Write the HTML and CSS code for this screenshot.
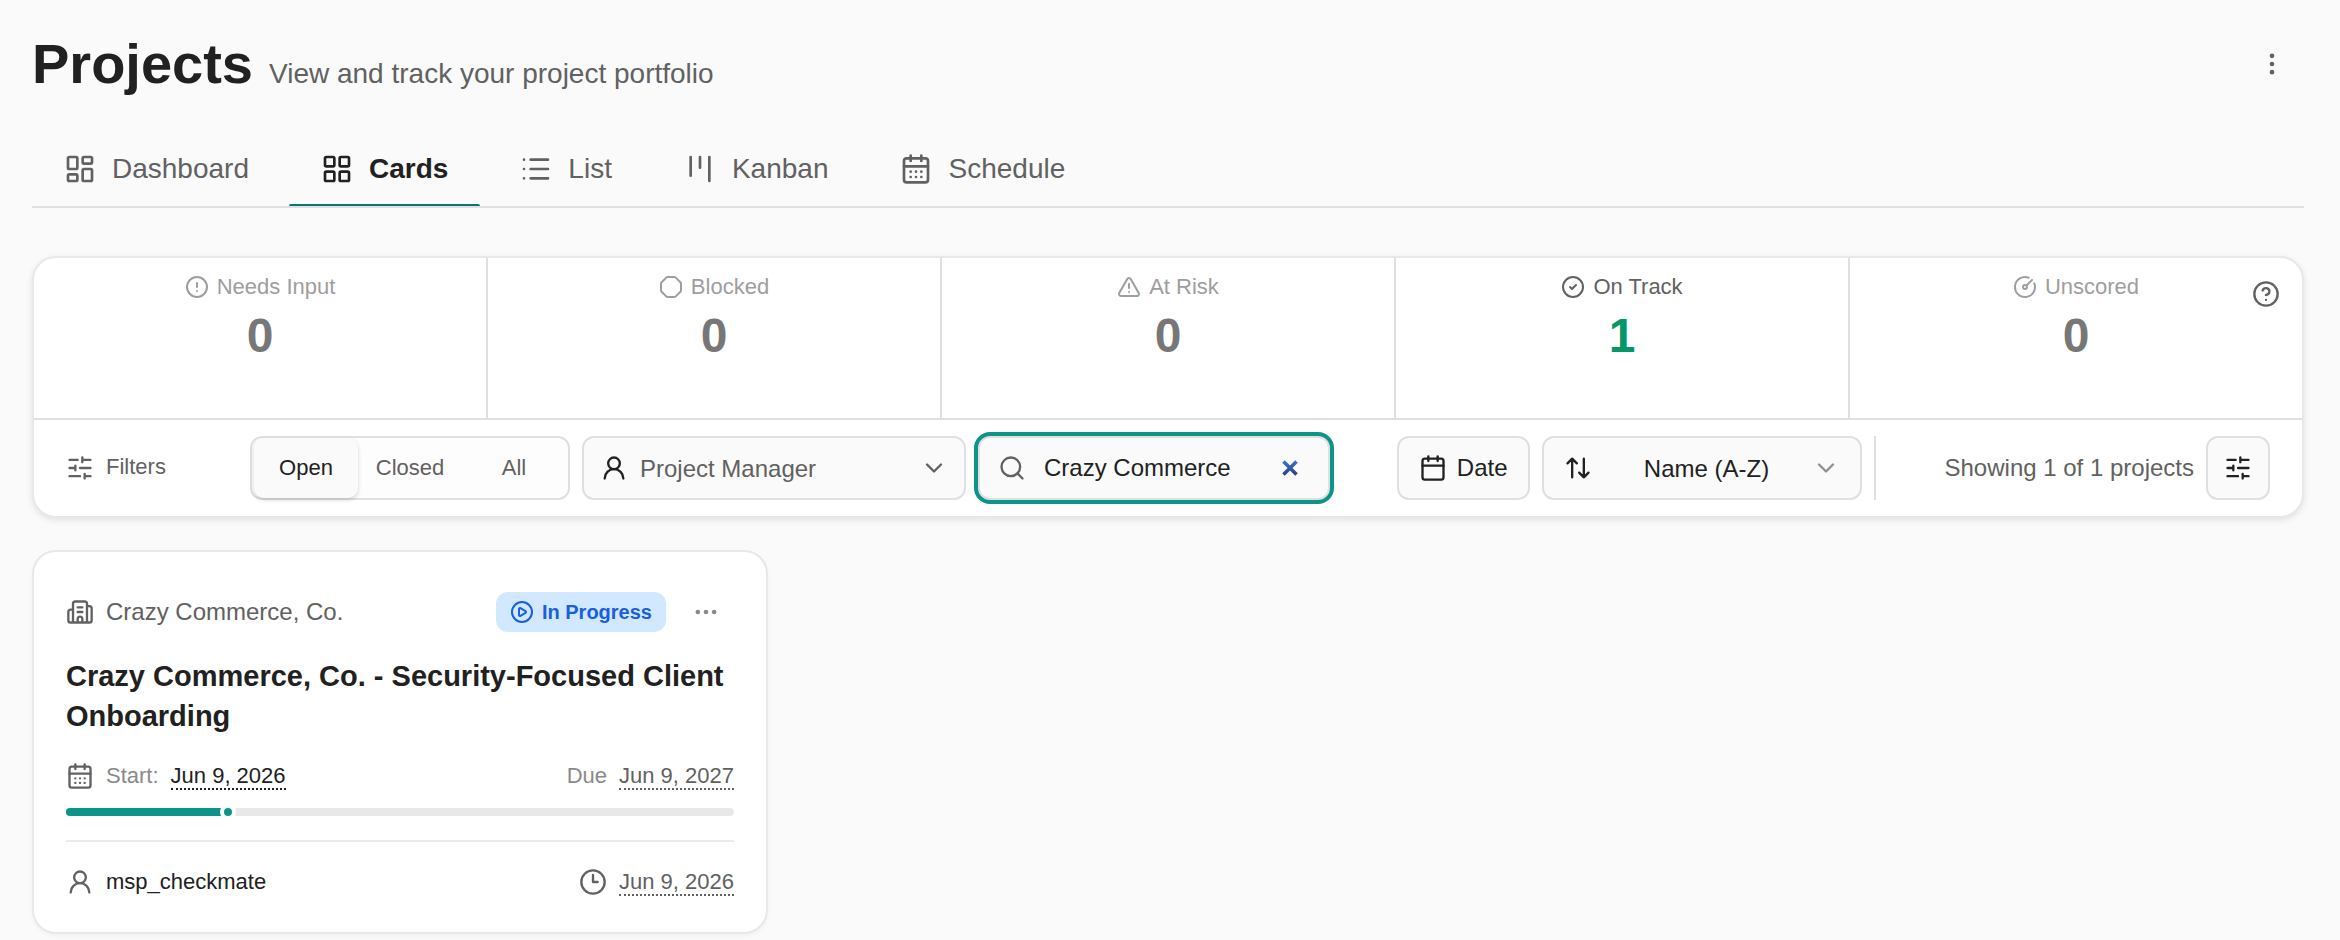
FILE: index.html
```html
<!DOCTYPE html>
<html lang="en">
<head>
<meta charset="utf-8">
<meta name="viewport" content="width=device-width, initial-scale=1">
<title>Projects</title>
<link rel="stylesheet" href="styles.css">
</head>
<body>
<svg class="sprite" aria-hidden="true">
  <symbol id="i-calendar" viewBox="0 0 24 24"><path d="M8 2v4M16 2v4M3 10h18"/><rect x="3" y="4" width="18" height="18" rx="2"/></symbol>
  <symbol id="i-calendar-days" viewBox="0 0 24 24"><path d="M8 2v4M16 2v4M3 10h18M8 14h.01M12 14h.01M16 14h.01M8 18h.01M12 18h.01M16 18h.01"/><rect x="3" y="4" width="18" height="18" rx="2"/></symbol>
  <symbol id="i-sliders" viewBox="0 0 24 24"><path d="M10 5H3M12 19H3M14 3v4M16 17v4M21 12h-9M21 19h-5M21 5h-7M8 10v4M8 12H3"/></symbol>
  <symbol id="i-user" viewBox="0 0 24 24"><circle cx="12" cy="8" r="5"/><path d="M20 21a8 8 0 0 0-16 0"/></symbol>
  <symbol id="i-chevron" viewBox="0 0 24 24"><path d="m6 9 6 6 6-6"/></symbol>
</svg>

<header class="page-header">
  <div class="heading">
    <h1 class="title">Projects</h1>
    <p class="subtitle">View and track your project portfolio</p>
  </div>
  <button class="icon-button" type="button" aria-label="More options">
    <svg class="icon" viewBox="0 0 24 24"><circle cx="12" cy="12" r="1"/><circle cx="12" cy="5" r="1"/><circle cx="12" cy="19" r="1"/></svg>
  </button>
</header>

<nav class="tabs" aria-label="Views">
  <a class="tab" href="#dashboard"><svg class="icon icon-lg" viewBox="0 0 24 24"><rect x="3" y="3" width="7" height="9" rx="1"/><rect x="14" y="3" width="7" height="5" rx="1"/><rect x="14" y="12" width="7" height="9" rx="1"/><rect x="3" y="16" width="7" height="5" rx="1"/></svg>Dashboard</a>
  <a class="tab tab-active" href="#cards" aria-current="page"><svg class="icon icon-lg" viewBox="0 0 24 24"><rect x="3" y="3" width="7" height="7" rx="1"/><rect x="14" y="3" width="7" height="7" rx="1"/><rect x="14" y="14" width="7" height="7" rx="1"/><rect x="3" y="14" width="7" height="7" rx="1"/></svg>Cards</a>
  <a class="tab" href="#list"><svg class="icon icon-lg" viewBox="0 0 24 24"><path d="M3 5h.01M3 12h.01M3 19h.01M8 5h13M8 12h13M8 19h13"/></svg>List</a>
  <a class="tab" href="#kanban"><svg class="icon icon-lg" viewBox="0 0 24 24"><path d="M5 3v14M12 3v8M19 3v18"/></svg>Kanban</a>
  <a class="tab" href="#schedule"><svg class="icon icon-lg"><use href="#i-calendar-days"/></svg>Schedule</a>
</nav>

<main>
  <section class="panel" aria-label="Status and filters">
    <div class="stats">
      <button class="stat" type="button">
        <span class="stat-label"><svg class="icon icon-sm" viewBox="0 0 24 24"><circle cx="12" cy="12" r="10"/><path d="M12 8v4M12 16h.01"/></svg>Needs Input</span>
        <span class="stat-value">0</span>
      </button>
      <button class="stat" type="button">
        <span class="stat-label"><svg class="icon icon-sm" viewBox="0 0 24 24"><path d="M2.586 16.726A2 2 0 0 1 2 15.312V8.688a2 2 0 0 1 .586-1.414l4.688-4.688A2 2 0 0 1 8.688 2h6.624a2 2 0 0 1 1.414.586l4.688 4.688A2 2 0 0 1 22 8.688v6.624a2 2 0 0 1-.586 1.414l-4.688 4.688a2 2 0 0 1-1.414.586H8.688a2 2 0 0 1-1.414-.586z"/></svg>Blocked</span>
        <span class="stat-value">0</span>
      </button>
      <button class="stat" type="button">
        <span class="stat-label"><svg class="icon icon-sm" viewBox="0 0 24 24"><path d="m21.73 18-8-14a2 2 0 0 0-3.48 0l-8 14A2 2 0 0 0 4 21h16a2 2 0 0 0 1.73-3M12 9v4M12 17h.01"/></svg>At Risk</span>
        <span class="stat-value">0</span>
      </button>
      <button class="stat stat-on" type="button">
        <span class="stat-label"><svg class="icon icon-sm" viewBox="0 0 24 24"><circle cx="12" cy="12" r="10"/><path d="m9 12 2 2 4-4"/></svg>On Track</span>
        <span class="stat-value">1</span>
      </button>
      <button class="stat" type="button">
        <span class="stat-label"><svg class="icon icon-sm" viewBox="0 0 24 24"><path d="M15.6 2.7a10 10 0 1 0 5.7 5.7M13.4 10.6 19 5"/><circle cx="12" cy="12" r="2"/></svg>Unscored</span>
        <span class="stat-value">0</span>
      </button>
      <button class="help" type="button" aria-label="Help">
        <svg class="icon" viewBox="0 0 24 24"><circle cx="12" cy="12" r="10"/><path d="M9.09 9a3 3 0 0 1 5.83 1c0 2-3 3-3 3M12 17h.01"/></svg>
      </button>
    </div>

    <div class="toolbar">
      <div class="toolbar-label"><svg class="icon"><use href="#i-sliders"/></svg><span>Filters</span></div>
      <div class="segmented" role="group" aria-label="Project state">
        <button class="segment segment-active" type="button" aria-pressed="true">Open</button>
        <button class="segment" type="button" aria-pressed="false">Closed</button>
        <button class="segment" type="button" aria-pressed="false">All</button>
      </div>
      <div class="field field-manager">
        <svg class="icon"><use href="#i-user"/></svg>
        <select class="select" aria-label="Project manager"><option>Project Manager</option></select>
        <svg class="icon chevron"><use href="#i-chevron"/></svg>
      </div>
      <div class="field field-search">
        <svg class="icon" viewBox="0 0 24 24"><path d="m21 21-4.34-4.34"/><circle cx="11" cy="11" r="8"/></svg>
        <input class="search-input" type="text" aria-label="Search projects" value="Crazy Commerce">
        <button class="clear" type="button" aria-label="Clear search">
          <svg class="clear-icon" viewBox="0 0 16 16"><defs><linearGradient id="clear-fill" x1="0" y1="0" x2="0" y2="16" gradientUnits="userSpaceOnUse"><stop offset="0" stop-color="#3f74cf"/><stop offset="1" stop-color="#24427c"/></linearGradient></defs><path fill="none" stroke="url(#clear-fill)" stroke-width="3.6" d="M1.500 1.500l13 13M14.500 1.500l-13 13"/></svg>
        </button>
      </div>
      <button class="field field-date" type="button"><svg class="icon"><use href="#i-calendar"/></svg>Date</button>
      <div class="field field-sort">
        <svg class="icon" viewBox="0 0 24 24"><path d="m21 16-4 4-4-4M17 20V4M3 8l4-4 4 4M7 4v16"/></svg>
        <select class="select" aria-label="Sort by"><option>Name (A-Z)</option></select>
        <svg class="icon chevron"><use href="#i-chevron"/></svg>
      </div>
      <div class="separator"></div>
      <p class="count">Showing 1 of 1 projects</p>
      <button class="field field-settings" type="button" aria-label="View settings"><svg class="icon"><use href="#i-sliders"/></svg></button>
    </div>
  </section>

  <div class="cards">
    <article class="card">
      <div class="card-head">
        <svg class="icon" viewBox="0 0 24 24"><path d="M10 12h4M10 8h4M14 21v-3a2 2 0 0 0-4 0v3M6 10H4a2 2 0 0 0-2 2v7a2 2 0 0 0 2 2h16a2 2 0 0 0 2-2V9a2 2 0 0 0-2-2h-2M6 21V5a2 2 0 0 1 2-2h8a2 2 0 0 1 2 2v16"/></svg>
        <span class="client">Crazy Commerce, Co.</span>
        <span class="badge"><svg class="icon icon-sm" viewBox="0 0 24 24"><circle cx="12" cy="12" r="10"/><path d="M9 9.003a1 1 0 0 1 1.517-.859l4.997 2.997a1 1 0 0 1 0 1.718l-4.997 2.997A1 1 0 0 1 9 14.996z"/></svg>In Progress</span>
        <button class="icon-button card-menu" type="button" aria-label="Project actions"><svg class="icon" viewBox="0 0 24 24"><circle cx="12" cy="12" r="1"/><circle cx="19" cy="12" r="1"/><circle cx="5" cy="12" r="1"/></svg></button>
      </div>
      <h2 class="card-title">Crazy Commerce, Co. - Security-Focused Client Onboarding</h2>
      <div class="row dates">
        <div class="group">
          <svg class="icon"><use href="#i-calendar-days"/></svg>
          <span class="pair"><span class="hint">Start:</span><span class="date date-strong">Jun 9, 2026</span></span>
        </div>
        <span class="pair"><span class="hint">Due</span><span class="date">Jun 9, 2027</span></span>
      </div>
      <div class="progress" role="progressbar" aria-label="Timeline" aria-valuenow="24" aria-valuemin="0" aria-valuemax="100">
        <div class="progress-fill" style="width:24.3%"><span class="progress-dot"></span></div>
      </div>
      <div class="row card-foot">
        <div class="group">
          <svg class="icon"><use href="#i-user"/></svg>
          <span class="owner">msp_checkmate</span>
        </div>
        <div class="group">
          <svg class="icon" viewBox="0 0 24 24"><circle cx="12" cy="12" r="10"/><path d="M12 6v6h4"/></svg>
          <span class="date">Jun 9, 2026</span>
        </div>
      </div>
    </article>
  </div>
</main>
</body>
</html>
```
FILE: styles.css
```css
* {
  box-sizing: border-box;
}

body {
  margin: 0;
  padding: 32px 36px 6px 32px;
  background: #fafafa;
  color: #212121;
  font-family: "Liberation Sans", Arial, Helvetica, sans-serif;
  font-size: 22px;
}

h1, h2, p {
  margin: 0;
}

button, input, select {
  font: inherit;
  color: inherit;
  margin: 0;
  padding: 0;
  border: 0;
  background: none;
}

button {
  cursor: pointer;
}

.sprite {
  display: none;
}

.icon {
  flex: none;
  width: 28px;
  height: 28px;
  fill: none;
  stroke: currentColor;
  stroke-width: 2;
  stroke-linecap: round;
  stroke-linejoin: round;
}

.icon-sm {
  width: 24px;
  height: 24px;
}

.icon-lg {
  width: 32px;
  height: 32px;
}

.icon-button {
  display: flex;
  align-items: center;
  justify-content: center;
  width: 64px;
  height: 64px;
  color: #616161;
}

/* Header */
.page-header {
  display: flex;
  align-items: center;
  justify-content: space-between;
}

.heading {
  display: flex;
  align-items: baseline;
  gap: 16px;
}

.title {
  font-size: 56px;
  line-height: 64px;
}

.subtitle {
  font-size: 28px;
  color: #616161;
}

.tabs {
  display: flex;
  gap: 8px;
  margin-top: 36px;
  border-bottom: 2px solid #e0e0e0;
}

.tab {
  position: relative;
  display: flex;
  align-items: center;
  gap: 16px;
  height: 74px;
  padding: 0 32px;
  font-size: 28px;
  color: #616161;
  text-decoration: none;
}

.tab-active {
  color: #212121;
  font-weight: bold;
}

.tab-active::after {
  content: "";
  position: absolute;
  left: 0;
  right: 0;
  bottom: 0;
  height: 2px;
  border-radius: 2px 2px 0 0;
  background: #0f766e;
}

/* Status panel */
.panel {
  margin-top: 48px;
  border: 2px solid #e8e8e8;
  border-radius: 24px;
  background: #fff;
  box-shadow: 0 2px 6px rgba(0, 0, 0, 0.1);
}

.stats {
  position: relative;
  display: flex;
  height: 162px;
  border-bottom: 2px solid #e0e0e0;
}

.stat {
  display: flex;
  flex: 1 1 0;
  flex-direction: column;
  align-items: center;
  gap: 6px;
  padding-top: 14px;
  border-right: 2px solid #e0e0e0;
  color: #9e9e9e;
}

.stat:nth-child(5) {
  border-right: 0;
}

.stat-label {
  display: flex;
  align-items: center;
  gap: 8px;
  line-height: 30px;
}

.stat-value {
  font-size: 48px;
  font-weight: bold;
  line-height: 56px;
  color: #777;
}

.stat-on {
  color: #616161;
}

.stat-on .stat-value {
  color: #059669;
}

.help {
  position: absolute;
  top: 22px;
  right: 22px;
  display: flex;
  color: #616161;
}

/* Toolbar */
.toolbar {
  display: flex;
  align-items: center;
  gap: 12px;
  padding: 16px 32px;
}

.toolbar-label {
  display: flex;
  align-items: center;
  gap: 12px;
  width: 172px;
  color: #616161;
}

.toolbar-label span {
  padding-bottom: 2px;
}

.segmented {
  display: grid;
  grid-template-columns: repeat(3, 1fr);
  width: 320px;
  height: 64px;
  padding: 0 2px;
  border: 2px solid #e0e0e0;
  border-radius: 12px;
  background: #fdfdfd;
}

.segment {
  border-radius: 10px;
  color: #616161;
}

.segment-active {
  background: #fafafa;
  color: #212121;
  box-shadow: 0 2px 4px rgba(0, 0, 0, 0.16);
}

.field {
  display: flex;
  align-items: center;
  gap: 12px;
  height: 64px;
  border: 2px solid #e0e0e0;
  border-radius: 12px;
  background: #fafafa;
  font-size: 24px;
}

.select {
  flex: 1;
  min-width: 0;
  height: 100%;
  appearance: none;
}

.field-manager {
  width: 384px;
  padding: 0 16px;
}

.field-manager .select,
.field-manager .chevron {
  color: #616161;
}

.field-search {
  width: 352px;
  padding: 0 30px 0 18px;
  gap: 18px;
  box-shadow: 0 0 0 4px #0d9488;
}

.field-search .icon {
  color: #616161;
}

.search-input {
  flex: 1;
  min-width: 0;
  height: 100%;
  outline: 0;
}

.clear {
  display: flex;
}

.clear-icon {
  width: 16px;
  height: 16px;
}

.field-date {
  gap: 10px;
  margin-left: auto;
  padding: 0 20px;
}

.field-sort {
  width: 320px;
  padding: 0 20px;
}

.field-sort .select {
  padding-left: 10px;
  text-align-last: center;
}

.field-sort .chevron {
  color: #8f8f8f;
}

.separator {
  width: 2px;
  height: 64px;
  background: #e0e0e0;
}

.count {
  margin-left: 57px;
  font-size: 24px;
  color: #616161;
}

.field-settings {
  width: 64px;
  justify-content: center;
}

/* Cards */
.cards {
  display: grid;
  grid-template-columns: repeat(3, 1fr);
  gap: 32px;
  margin-top: 32px;
}

.card {
  padding: 32px;
  border: 2px solid #e8e8e8;
  border-radius: 24px;
  background: #fff;
  box-shadow: 0 2px 4px rgba(0, 0, 0, 0.04);
}

.card-head {
  display: flex;
  align-items: center;
  gap: 12px;
  color: #616161;
}

.client {
  flex: 1;
  font-size: 24px;
}

.badge {
  display: flex;
  align-items: center;
  gap: 8px;
  height: 40px;
  padding: 0 14px;
  border-radius: 12px;
  background: #d1e8ff;
  color: #1a5fdc;
  font-size: 20px;
  font-weight: bold;
}

.card-menu {
  width: 56px;
  height: 56px;
  color: #8a8a8a;
}

.card-title {
  margin-top: 16px;
  font-size: 29px;
  line-height: 40px;
}

.row {
  display: flex;
  align-items: flex-end;
  justify-content: space-between;
  line-height: 24px;
}

.group {
  display: flex;
  align-items: flex-end;
  gap: 12px;
  color: #616161;
}

.pair {
  display: flex;
  align-items: baseline;
  gap: 12px;
}

.hint {
  color: #8a8a8a;
}

.date {
  border-bottom: 2px dotted currentColor;
  color: #616161;
}

.date-strong,
.owner {
  color: #212121;
}

.owner {
  padding-bottom: 2px;
}

.dates {
  margin-top: 26px;
}

.progress {
  margin-top: 18px;
  height: 8px;
  border-radius: 4px;
  background: #e8e8e8;
}

.progress-fill {
  position: relative;
  height: 8px;
  border-radius: 4px;
  background: #0d9488;
}

.progress-dot {
  position: absolute;
  top: -4px;
  right: -8px;
  width: 16px;
  height: 16px;
  border: 4px solid #fff;
  border-radius: 50%;
  background: #0d9488;
}

.card-foot {
  margin-top: 24px;
  padding: 26px 0 4px;
  border-top: 2px solid #ebebeb;
}
```
